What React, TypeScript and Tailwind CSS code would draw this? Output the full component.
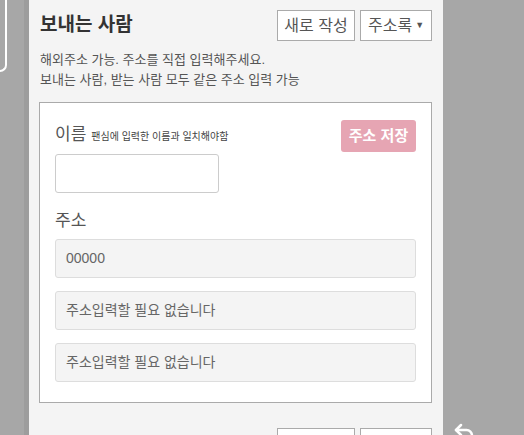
import { Undo2 } from 'lucide-react';

const font = { fontFamily: '"Liberation Sans", "Noto Sans CJK KR", sans-serif' };

export default function App() {
  return (
    <div className="flex h-[435px] w-[524px] overflow-hidden bg-[#a7a7a7]" style={font}>
      <div className="flex w-[29px] shrink-0">
        <div className="h-[72px] w-[7px] rounded-br-[8px] border-b-2 border-r-2 border-white" />
        <div className="flex-1" />
        <div className="w-[5px] bg-[#9d9d9d]" />
      </div>
      <SenderPanel />
      <div className="flex-1 pl-[9px] pt-[421px]">
        <Undo2 className="h-[24px] w-[24px] text-white" strokeWidth={2.5} />
      </div>
    </div>
  );
}

function SenderPanel() {
  return (
    <div className="w-[414px] shrink-0 bg-[#f4f4f4] pl-[10px] pr-[11px] pt-[10px]">
      <div className="flex items-center justify-between">
        <h2 className="pl-[1px] text-[19px] font-bold text-[#333]">보내는 사람</h2>
        <div className="flex gap-[5px]">
          <button className="h-[31px] w-[78px] border border-[#aaa] bg-white text-[16px] text-[#555]">새로 작성</button>
          <button className="flex h-[31px] w-[72px] items-center justify-center gap-[3px] border border-[#aaa] bg-white text-[16px] text-[#555]">
            주소록
            <span className="text-[9px]">▼</span>
          </button>
        </div>
      </div>
      <div className="mt-[9px] pl-[1px] text-[13px] leading-[20px] text-[#555]">
        <p>해외주소 가능. 주소를 직접 입력해주세요.</p>
        <p>보내는 사람, 받는 사람 모두 같은 주소 입력 가능</p>
      </div>
      <div className="mt-[12px] border border-[#aaa] bg-white px-[15px] pb-[20px] pt-[17px]">
        <div className="flex items-start justify-between">
          <div className="flex items-baseline gap-[5px] pt-[2px]">
            <span className="text-[17px] text-[#555]">이름</span>
            <span className="text-[10px] text-[#444]">팬심에 입력한 이름과 일치해야함</span>
          </div>
          <button className="h-[32px] w-[75px] rounded-[3px] bg-[#e6a5b3] text-[15px] font-bold text-white">주소 저장</button>
        </div>
        <input className="mt-[2px] block h-[39px] w-[164px] rounded-[3px] border border-[#ccc] bg-white px-[10px] outline-none" />
        <p className="mt-[17px] text-[17px] leading-[22px] text-[#555]">주소</p>
        <div className="mt-[7px] flex flex-col gap-[13px]">
          <AddressField value="00000" />
          <AddressField value="주소입력할 필요 없습니다" />
          <AddressField value="주소입력할 필요 없습니다" />
        </div>
      </div>
      <div className="mt-[25px] flex justify-end gap-[5px]">
        <button className="h-[31px] w-[78px] border border-[#aaa] bg-white" />
        <button className="h-[31px] w-[72px] border border-[#aaa] bg-white" />
      </div>
    </div>
  );
}

function AddressField({ value }: { value: string }) {
  return (
    <div className="flex h-[39px] items-center rounded-[3px] border border-[#ddd] bg-[#f4f4f4] px-[10px] text-[14px] text-[#666]">
      {value}
    </div>
  );
}
